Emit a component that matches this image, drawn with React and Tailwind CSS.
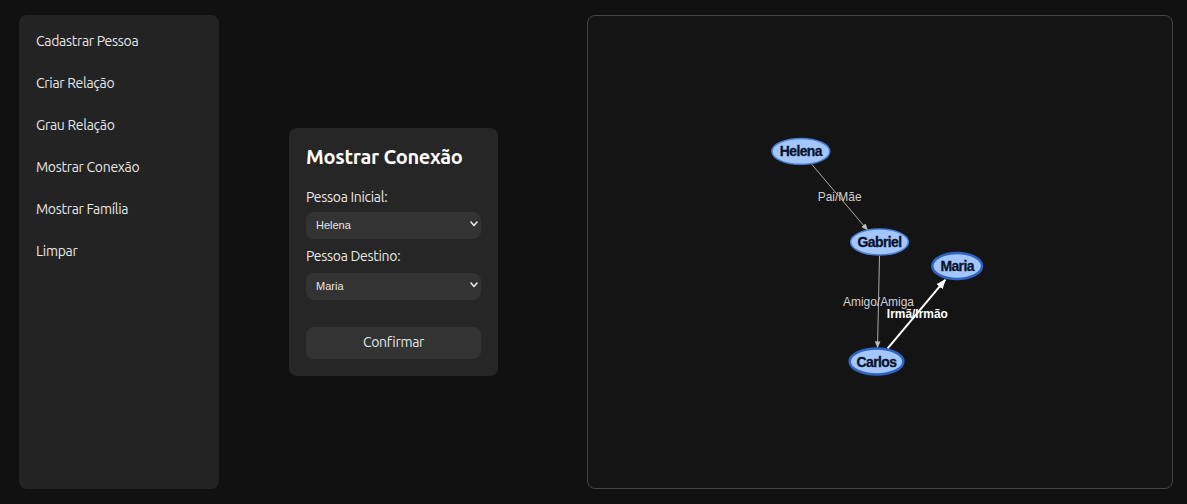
import React from 'react';

const MENU = ['Cadastrar Pessoa', 'Criar Relação', 'Grau Relação', 'Mostrar Conexão', 'Mostrar Família', 'Limpar'];

const NODES = [
    { id: 'Helena', x: 213, y: 136, rx: 29, ry: 13, bold: false },
    { id: 'Gabriel', x: 292, y: 227, rx: 29, ry: 13, bold: false },
    { id: 'Maria', x: 370, y: 251, rx: 25, ry: 13, bold: true },
    { id: 'Carlos', x: 289, y: 347, rx: 27, ry: 13, bold: true },
];

const Graph = () => (
    <svg className="w-full h-full" viewBox="0 0 585 474">
        <defs>
            <marker id="arrowGray" viewBox="0 0 10 10" refX="9" refY="5" markerWidth="7" markerHeight="7" orient="auto">
                <path d="M0,1 L10,5 L0,9 z" fill="#bbbbbb" />
            </marker>
            <marker id="arrowWhite" viewBox="0 0 10 10" refX="9" refY="5" markerWidth="5" markerHeight="5" orient="auto">
                <path d="M0,1 L10,5 L0,9 z" fill="#ffffff" />
            </marker>
        </defs>

        {/* edges */}
        <line x1="224" y1="149" x2="280" y2="215" stroke="#aaaaaa" strokeWidth="1" markerEnd="url(#arrowGray)" />
        <line x1="292" y1="241" x2="290" y2="333" stroke="#aaaaaa" strokeWidth="1" markerEnd="url(#arrowGray)" />
        <line x1="300" y1="334" x2="358" y2="265" stroke="#ffffff" strokeWidth="2" markerEnd="url(#arrowWhite)" />

        <text x="252" y="186" textAnchor="middle" fill="#d0d0d0" fontSize="12" fontFamily="Liberation Sans, Arial, sans-serif">Pai/Mãe</text>
        <text x="291" y="291" textAnchor="middle" fill="#d0d0d0" fontSize="12" fontFamily="Liberation Sans, Arial, sans-serif">Amigo/Amiga</text>
        <text x="330" y="303" textAnchor="middle" fill="#ffffff" fontSize="12" fontWeight="bold" fontFamily="Liberation Sans, Arial, sans-serif">Irmã/Irmão</text>

        {/* nodes */}
        {NODES.map(n => (
            <g key={n.id}>
                <ellipse cx={n.x} cy={n.y} rx={n.rx} ry={n.ry} fill="#a2c6fd" stroke={n.bold ? '#2f63c4' : '#4a7fd8'} strokeWidth={n.bold ? 2.5 : 1.5} />
                <text x={n.x} y={n.y + 5} textAnchor="middle" fill="#08132a" stroke="#08132a" strokeWidth="0.3" fontSize="14" fontWeight="bold" fontFamily="Liberation Sans, Arial, sans-serif" letterSpacing="-0.6">{n.id}</text>
            </g>
        ))}
    </svg>
);

const Select = ({ value }) => (
    <div className="relative">
        <select
            defaultValue={value}
            className="w-full h-[27px] bg-[#333333] text-[#e6e6e6] text-[11px] rounded-lg pl-[10px] pr-6 appearance-none outline-none"
            style={{ fontFamily: '"Liberation Sans", Arial, sans-serif' }}
        >
            <option>Helena</option>
            <option>Gabriel</option>
            <option>Maria</option>
            <option>Carlos</option>
        </select>
        <svg className="absolute right-[3px] top-[10px] w-[8px] h-[6px] pointer-events-none" viewBox="0 0 8 6">
            <path d="M1 1 L4 4.5 L7 1" stroke="#e6e6e6" strokeWidth="1.6" fill="none" strokeLinecap="round" strokeLinejoin="round" />
        </svg>
    </div>
);

export default function App() {
    return (
        <div className="w-[1187px] h-[504px] bg-[#111111] flex text-[#e8e8e8]" style={{ fontFamily: 'Ubuntu, "Noto Sans", sans-serif' }}>
            {/* Sidebar */}
            <div className="w-[200px] ml-[19px] my-[15px] bg-[#232323] rounded-lg pt-[16px] pl-[17px] flex flex-col gap-[22px] shrink-0">
                {MENU.map(m => (
                    <div key={m} className="text-[14px] leading-[20px] text-[#e6e6e6] tracking-[-0.3px]">{m}</div>
                ))}
            </div>

            {/* Middle */}
            <div className="flex-1 flex items-center">
                <div className="ml-[70px] w-[209px] bg-[#262626] rounded-lg px-[17px] pt-[16px] pb-[17px]">
                    <h2 className="text-[20px] leading-[26px] font-bold text-white tracking-[-0.3px]">Mostrar Conexão</h2>
                    <div className="text-[14px] leading-[20px] mt-[17px] mb-[4px] tracking-[-0.3px]">Pessoa Inicial:</div>
                    <Select value="Helena" />
                    <div className="text-[14px] leading-[20px] mt-[7px] mb-[6px] tracking-[-0.3px]">Pessoa Destino:</div>
                    <Select value="Maria" />
                    <button className="mt-[27px] w-full h-[32px] bg-[#333333] rounded-lg text-[14px] text-[#e6e6e6] tracking-[-0.3px]">Confirmar</button>
                </div>
            </div>

            {/* Graph panel */}
            <div className="w-[586px] mr-[14px] my-[15px] border border-[#444444] rounded-lg bg-[#141414] shrink-0 overflow-hidden">
                <Graph />
            </div>
        </div>
    );
}
